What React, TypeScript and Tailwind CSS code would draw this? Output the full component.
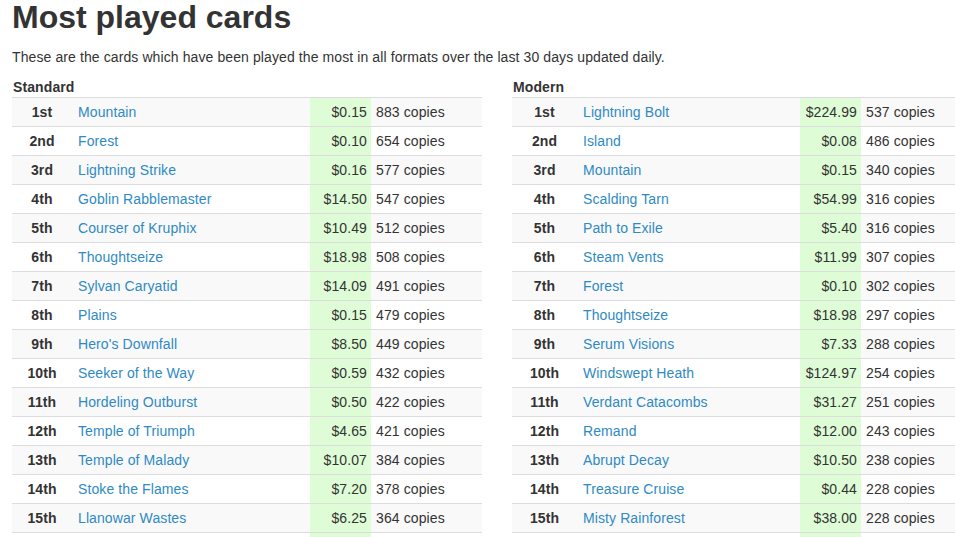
import React from "react";

type Row = { name: string; price: string; copies: number };

const standard: Row[] = [
  { name: "Mountain", price: "$0.15", copies: 883 },
  { name: "Forest", price: "$0.10", copies: 654 },
  { name: "Lightning Strike", price: "$0.16", copies: 577 },
  { name: "Goblin Rabblemaster", price: "$14.50", copies: 547 },
  { name: "Courser of Kruphix", price: "$10.49", copies: 512 },
  { name: "Thoughtseize", price: "$18.98", copies: 508 },
  { name: "Sylvan Caryatid", price: "$14.09", copies: 491 },
  { name: "Plains", price: "$0.15", copies: 479 },
  { name: "Hero's Downfall", price: "$8.50", copies: 449 },
  { name: "Seeker of the Way", price: "$0.59", copies: 432 },
  { name: "Hordeling Outburst", price: "$0.50", copies: 422 },
  { name: "Temple of Triumph", price: "$4.65", copies: 421 },
  { name: "Temple of Malady", price: "$10.07", copies: 384 },
  { name: "Stoke the Flames", price: "$7.20", copies: 378 },
  { name: "Llanowar Wastes", price: "$6.25", copies: 364 },
];

const modern: Row[] = [
  { name: "Lightning Bolt", price: "$224.99", copies: 537 },
  { name: "Island", price: "$0.08", copies: 486 },
  { name: "Mountain", price: "$0.15", copies: 340 },
  { name: "Scalding Tarn", price: "$54.99", copies: 316 },
  { name: "Path to Exile", price: "$5.40", copies: 316 },
  { name: "Steam Vents", price: "$11.99", copies: 307 },
  { name: "Forest", price: "$0.10", copies: 302 },
  { name: "Thoughtseize", price: "$18.98", copies: 297 },
  { name: "Serum Visions", price: "$7.33", copies: 288 },
  { name: "Windswept Heath", price: "$124.97", copies: 254 },
  { name: "Verdant Catacombs", price: "$31.27", copies: 251 },
  { name: "Remand", price: "$12.00", copies: 243 },
  { name: "Abrupt Decay", price: "$10.50", copies: 238 },
  { name: "Treasure Cruise", price: "$0.44", copies: 228 },
  { name: "Misty Rainforest", price: "$38.00", copies: 228 },
];

const ordinal = (n: number) => {
  if (n % 100 >= 11 && n % 100 <= 13) return `${n}th`;
  if (n % 10 === 1) return `${n}st`;
  if (n % 10 === 2) return `${n}nd`;
  if (n % 10 === 3) return `${n}rd`;
  return `${n}th`;
};

function CardTable({ title, rows, cols }: { title: string; rows: Row[]; cols: [number, number, number, number] }) {
  return (
    <div className="w-[470px] shrink-0">
      <h3 className="font-bold text-[14px] leading-5 mt-[10px] pl-px">{title}</h3>
      <table className="w-[470px] table-fixed border-collapse text-[14px] leading-5">
        <colgroup>
          {cols.map((w, i) => <col key={i} style={{ width: w }} />)}
        </colgroup>
        <tbody>
          {rows.map((r, i) => (
            <tr key={r.name + i} className={`border-t border-[#dddddd] ${i % 2 === 0 ? "bg-[#f9f9f9]" : "bg-white"}`}>
              <td className="py-1 pl-0.5 text-center font-bold">{ordinal(i + 1)}</td>
              <td className="py-1 pl-2 text-[#2f8ac4] whitespace-nowrap">{r.name}</td>
              <td className="py-1 pr-1 text-right bg-[#defdd6]">{r.price}</td>
              <td className="py-1 pl-[5px] whitespace-nowrap">{r.copies} copies</td>
            </tr>
          ))}
          <tr className="border-t border-[#dddddd] bg-white">
            <td className="py-1">&nbsp;</td>
            <td className="py-1" />
            <td className="py-1 bg-[#defdd6]" />
            <td className="py-1" />
          </tr>
        </tbody>
      </table>
    </div>
  );
}

export default function App() {
  return (
    <div className="w-[955px] h-[537px] overflow-hidden bg-white text-[#333333] font-['Liberation_Sans',Arial,sans-serif]">
      <div className="pl-3 w-[1000px] tracking-[0.1px]">
        <h1 className="text-[32px] leading-[35px] font-bold m-0 tracking-normal">Most played cards</h1>
        <p className="text-[14px] leading-5 mt-3">These are the cards which have been played the most in all formats over the last 30 days updated daily.</p>
        <div className="flex gap-[30px]">
          <CardTable title="Standard" rows={standard} cols={[58, 240, 61, 111]} />
          <CardTable title="Modern" rows={modern} cols={[63, 225, 61, 121]} />
        </div>
      </div>
    </div>
  );
}
